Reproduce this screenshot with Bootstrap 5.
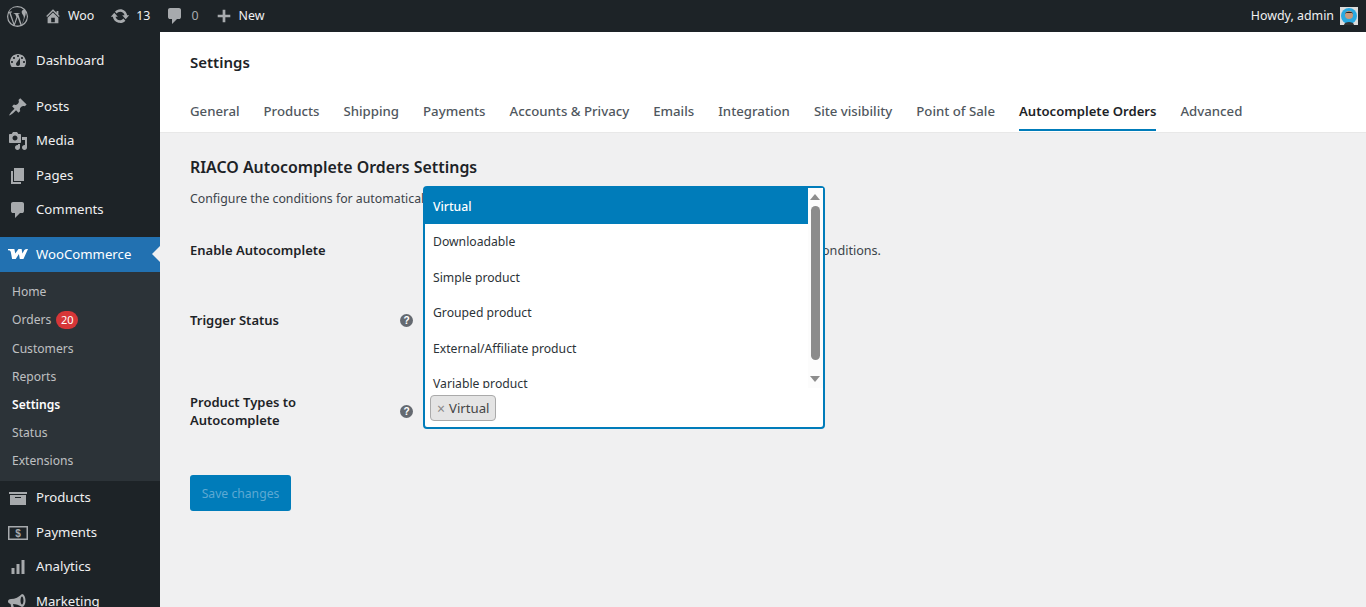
<!DOCTYPE html>
<html lang="en"><head><meta charset="utf-8"><title>Settings</title>
<link href="https://cdn.jsdelivr.net/npm/bootstrap@5.3.0/dist/css/bootstrap.min.css" rel="stylesheet">
<style>
html,body{height:607px;overflow:hidden}
body{font-family:"Noto Sans","Open Sans",sans-serif;font-size:12.3px;background:#f0f0f1;color:#3c434a}
.wpbar{height:32px;background:#1d2327;color:#f0f0f1;font-size:12.4px;padding-left:7px;padding-right:8px}
.wpbar svg{fill:#a7aaad;display:block}
.wpbar span{padding-top:1px}
.baritem{gap:6px;height:32px}
.barright{gap:6px}
.side{width:160px;background:#1d2327;height:575px;overflow:hidden;flex:none;padding-top:12px}
.mitem{height:34.45px;color:#f0f0f1;font-size:13.2px;padding:0 0 0 8px}
.mitem .ico{width:28px;flex:none;display:flex;align-items:center;justify-content:flex-start}
.mitem svg{fill:#a7aaad;display:block}
.mitem.cur{background:#2271b1;color:#fff;position:relative;margin-top:10px}
.mitem.cur svg{fill:#fff}
.mitem.cur::after{content:"";position:absolute;right:0;top:9px;border:8px solid transparent;border-right-color:#f0f0f1}
.gapm{margin-top:11px}
.subm{background:#2c3338;height:209.5px;padding:6.5px 0 0 12px;font-size:12.1px;color:rgba(240,240,241,.75)}
.subi{height:28.2px;display:flex;align-items:center;gap:5px}
.subi.on{color:#fff;font-weight:600}
.cnt{background:#d63638;color:#fff;font-size:11px;border-radius:10px;min-width:22px;height:18px;line-height:18px;text-align:center}
.hdr{background:#fff;height:101px;padding:20px 30px 0;border-bottom:1px solid #e8e8e8}
.hdr h1{font-size:15px;font-weight:600;color:#1d2327;margin:0;line-height:20px}
.wtabs{gap:24px;margin-top:28px}
.wtab{font-size:13.23px;font-weight:500;color:#50575e;height:31px;line-height:20px;padding-top:1px;white-space:nowrap}
.wtab.act{color:#1d2327;font-weight:600;font-size:13.1px;border-bottom:2px solid #007cba}
.body-area{padding:23px 30px 0;min-width:0}
.body-area h2{font-size:15.9px;font-weight:600;color:#1d2327;margin:0;line-height:22px}
.intro{margin:11px 0 0;line-height:20px;white-space:nowrap}
.frow{display:flex}
.flab{width:210px;flex:none;font-weight:600;color:#1d2327;font-size:13px;line-height:18px;padding-right:60px}
.helpi{width:23px;flex:none}
.helpi svg{display:block}
.r1{margin-top:32px;height:20px}
.r1 .flab{padding-right:0;white-space:nowrap}
.r2{margin-top:50px;height:20px}
.r3{margin-top:62px;align-items:flex-start}
.r1txt{width:458px;margin-left:23px;white-space:nowrap;text-align:right;font-size:12.6px;line-height:20px}
.fbox{position:relative;width:402px;height:39px;margin-top:-3px;background:#fff;border:2px solid #007cba;border-radius:0 0 4px 4px;padding:3px 5px}
.tagx{display:inline-flex;align-items:center;gap:4px;height:26px;padding:1px 5px 0 6px;background:#e4e4e4;border:1px solid #aaa;border-radius:4px;font-size:13.2px;color:#444}
.tagx b{font-weight:400;color:#888;font-size:14px}
.dropx{position:absolute;left:-2px;bottom:100%;width:402px;height:206px;background:#fff;border:2px solid #007cba;border-bottom:0;border-radius:4px 4px 0 0}
.optwrap{height:200px;overflow:hidden;position:relative}
.opt{height:35.5px;padding:2px 8px 0;display:flex;align-items:center;color:#2c3338;font-size:12.2px;margin-right:15px}
.opt.hi{background:#007cba;color:#fff;font-weight:500}
.sbar{position:absolute;right:0;top:0;width:15px;height:200px;background:#fcfcfc}
.sthumb{position:absolute;left:3px;top:18px;width:9px;height:154px;background:#8c8c8c;border-radius:5px}
.sup,.sdn{position:absolute;left:2px;border:5px solid transparent}
.sup{top:1px;border-bottom:6px solid #8c8c8c}
.sdn{top:188px;border-top:6px solid #8c8c8c}
.btn.savebtn,.btn.savebtn:disabled{display:block;margin-top:46px;width:101px;height:36px;background:#007cba;color:#5da9d3;border:0;border-radius:3px;font-size:12.2px;padding:3px 0 0;opacity:1}
</style></head><body>
<div class="wpbar d-flex align-items-center justify-content-between">
 <div class="d-flex align-items-center">
  <svg width="21" height="21" viewBox="0 0 20 20" style="margin-right:16px"><path fill-rule="evenodd" d="M10 0a10 10 0 1 0 0 20 10 10 0 0 0 0-20zm0 1.200a8.800 8.800 0 0 1 6 2.350c-1.200 0-2 1-2 2.100 0 1 .6 1.800 1.100 2.700.4.700.9 1.600.9 2.900 0 .9-.3 2-.9 3.600l-1 3.100-3.500-10.500c.6 0 1.100-.1 1.100-.1.500-.1.500-.8 0-.8 0 0-1.600.1-2.600.1s-2.500-.1-2.500-.1c-.5 0-.6.800 0 .8 0 0 .5.100 1 .1L9 10.400l-2.100 6.300L3.400 6.200c.6 0 1.100-.1 1.100-.1.500-.1.500-.8 0-.8 0 0-1.600.1-2.600.1A8.800 8.800 0 0 1 10 1.200zM1.200 10c0-1.300.3-2.500.8-3.600l4.200 11.500A8.800 8.800 0 0 1 1.200 10zm8.900.8 2.700 7.400a8.800 8.800 0 0 1-5.400.1zm7.700-4.900a8.800 8.800 0 0 1-3.300 11.800l2.700-7.700c.5-1.300.7-2.300.7-3.200 0-.3 0-.6-.1-.9z"/></svg>
  <div class="baritem d-flex align-items-center" style="margin-right:16px"><svg width="18" height="18" viewBox="0 0 20 20"><path d="M16 8.500l1.530 1.530-1.060 1.060L10 4.620l-6.470 6.470-1.060-1.060L10 2.500l4 4v-2h2v4zm-6-2.460l6 5.990V18H4v-5.970zM12 17v-5H8v5h4z"/></svg><span>Woo</span></div>
  <div class="baritem d-flex align-items-center" style="margin-right:17px"><svg width="20" height="20" viewBox="0 0 20 20"><path d="M10.200 3.280c3.530 0 6.430 2.610 6.920 6h2.080l-3.500 4-3.500-4h2.320c-.45-1.970-2.210-3.440-4.320-3.440-1.450 0-2.730.71-3.540 1.780L4.950 5.660C6.230 4.200 8.110 3.280 10.200 3.280zm-.4 13.440c-3.520 0-6.430-2.610-6.920-6H.8l3.500-4c1.170 1.330 2.330 2.670 3.500 4H5.480c.45 1.970 2.210 3.440 4.320 3.440 1.450 0 2.730-.71 3.540-1.780l2.090 2.370c-1.280 1.460-3.160 2.380-5.630 2.370z"/></svg><span>13</span></div>
  <div class="baritem d-flex align-items-center" style="margin-right:16px"><svg width="20" height="20" viewBox="0 0 20 20" style="margin-left:-2px"><path d="M5 2h9q.82 0 1.410.59T16 4v7q0 .82-.59 1.410T14 13h-2l-5 5v-5H5q-.82 0-1.410-.59T3 11V4q0-.82.59-1.410T5 2z"/></svg><span style="color:#a7aaad">0</span></div>
  <div class="baritem d-flex align-items-center" style="gap:6px"><svg width="18" height="18" viewBox="0 0 20 20"><path d="M8.500 3h3v5.500H17v3h-5.500V17h-3v-5.500H3v-3h5.500z"/></svg><span>New</span></div>
 </div>
 <div class="d-flex align-items-center barright">
  <span>Howdy, admin</span>
  <svg width="18" height="18" viewBox="0 0 18 18" style="fill:none"><rect width="18" height="18" fill="#ddd"/><circle cx="9" cy="9" r="8" fill="#29a9e1"/><circle cx="9" cy="8" r="4" fill="#c99a7c"/><path d="M5 7c0-3 8-3 8 0l-1-1H6z" fill="#222"/><path d="M4 18c0-4 10-4 10 0z" fill="#333"/></svg>
 </div>
</div>
<div class="d-flex">
 <nav class="side">
  <div class="mitem d-flex align-items-center"><span class="ico"><svg width="20" height="20" viewBox="0 0 20 20"><path d="M3.760 16h12.480c1.100-1.370 1.760-3.110 1.760-5 0-4.420-3.580-8-8-8s-8 3.580-8 8c0 1.890.66 3.630 1.760 5zM10 4c.55 0 1 .45 1 1s-.45 1-1 1-1-.45-1-1 .45-1 1-1zM6 6c.55 0 1 .45 1 1s-.45 1-1 1-1-.45-1-1 .45-1 1-1zm8 0c.55 0 1 .45 1 1s-.45 1-1 1-1-.45-1-1 .45-1 1-1zm-5.370 5.550L12 7v6c0 1.100-.9 2-2 2s-2-.9-2-2c0-.57.24-1.080.63-1.450zM4 10c.55 0 1 .45 1 1s-.45 1-1 1-1-.45-1-1 .45-1 1-1zm12 0c.55 0 1 .45 1 1s-.45 1-1 1-1-.45-1-1 .45-1 1-1z"/></svg></span>Dashboard</div>
  <div class="mitem d-flex align-items-center gapm"><span class="ico"><svg width="20" height="20" viewBox="0 0 20 20"><path d="M10.440 3.020l1.820-1.820 6.360 6.350-1.830 1.820c-1.050-.68-2.480-.57-3.410.36l-.75.75c-.92.93-1.040 2.350-.35 3.410l-1.830 1.820-2.410-2.410-2.800 2.790c-.42.42-3.380 2.710-3.800 2.290s1.860-3.390 2.280-3.810l2.790-2.790L4.100 9.360l1.830-1.820c1.050.69 2.480.57 3.400-.36l.75-.75c.93-.92 1.050-2.350.36-3.410z"/></svg></span>Posts</div>
  <div class="mitem d-flex align-items-center"><span class="ico"><svg width="20" height="20" viewBox="0 0 20 20"><path d="M13 11V4c0-.55-.45-1-1-1h-1.670L9 1H5L3.670 3H2c-.55 0-1 .45-1 1v7c0 .55.45 1 1 1h10c.55 0 1-.45 1-1zM7 4.500c1.380 0 2.500 1.120 2.500 2.500S8.380 9.500 7 9.500 4.500 8.380 4.500 7 5.620 4.500 7 4.500zM14 6h5v10.500c0 1.380-1.120 2.500-2.500 2.500S14 17.880 14 16.500s1.120-2.500 2.500-2.500c.17 0 .34.02.5.05V9h-3V6zm-4 8.050V13h2v3.500c0 1.380-1.120 2.500-2.500 2.500S7 17.880 7 16.500 8.120 14 9.500 14c.17 0 .34.02.5.05z"/></svg></span>Media</div>
  <div class="mitem d-flex align-items-center"><span class="ico"><svg width="20" height="20" viewBox="0 0 20 20"><path d="M6 15V2h10v13H6zm-1 1h8v2H3V5h2v11z"/></svg></span>Pages</div>
  <div class="mitem d-flex align-items-center"><span class="ico"><svg width="20" height="20" viewBox="0 0 20 20"><path d="M5 2h9q.82 0 1.410.59T16 4v7q0 .82-.59 1.410T14 13h-2l-5 5v-5H5q-.82 0-1.410-.59T3 11V4q0-.82.59-1.410T5 2z"/></svg></span>Comments</div>
  <div class="mitem cur d-flex align-items-center"><span class="ico"><svg width="20" height="12" viewBox="0 0 22 12"><path d="M0 .5h7l1 5L11.500.5h3.500l.8 5L18 1.500Q19 .2 22 .5l-5 11h-4L12 6l-3.500 5.500H4.500L3 3.500Q2.600 2 0 2z"/></svg></span>WooCommerce</div>
  <div class="subm">
   <div class="subi">Home</div>
   <div class="subi">Orders <span class="cnt">20</span></div>
   <div class="subi">Customers</div>
   <div class="subi">Reports</div>
   <div class="subi on">Settings</div>
   <div class="subi">Status</div>
   <div class="subi">Extensions</div>
  </div>
  <div class="mitem d-flex align-items-center"><span class="ico"><svg width="20" height="20" viewBox="0 0 20 20"><path d="M19 4v2H1V4h18zM2 7h16v10H2V7zm11 3V9H7v1h6z"/></svg></span>Products</div>
  <div class="mitem d-flex align-items-center"><span class="ico"><svg width="20" height="16" viewBox="0 0 20 16"><path fill-rule="evenodd" d="M0 1h20v14H0zm1.500 1.500v11h17v-11z"/><text x="10" y="12" text-anchor="middle" font-size="10" font-weight="700" font-family="Liberation Sans">$</text></svg></span>Payments</div>
  <div class="mitem d-flex align-items-center"><span class="ico"><svg width="20" height="20" viewBox="0 0 20 20"><path d="M18 3v14h-3V3h3zm-5 4v10h-3V7h3zm-5 4v6H5v-6h3z" transform="translate(-1.500 0)"/></svg></span>Analytics</div>
  <div class="mitem d-flex align-items-center"><span class="ico"><svg width="20" height="20" viewBox="0 0 20 20"><path fill-rule="evenodd" d="M14 2c2 0 3.500 3 3.500 6.500S16 15 14 15c-3-2-6-3-9-3l1.500 6H4l-1.500-6C1 11.500 0 10.500 0 9.500 0 8 1 7 3 7c4 0 8-2 11-5zm0 2.500c-.8 0-1.500 1.800-1.500 4s.7 4 1.500 4 1.500-1.800 1.500-4-.7-4-1.500-4z"/></svg></span>Marketing</div>
 </nav>
 <main class="flex-grow-1" style="min-width:0">
  <div class="hdr">
   <h1>Settings</h1>
   <div class="wtabs d-flex">
    <span class="wtab">General</span><span class="wtab">Products</span><span class="wtab">Shipping</span><span class="wtab">Payments</span><span class="wtab">Accounts &amp; Privacy</span><span class="wtab">Emails</span><span class="wtab">Integration</span><span class="wtab">Site visibility</span><span class="wtab">Point of Sale</span><span class="wtab act">Autocomplete Orders</span><span class="wtab">Advanced</span>
   </div>
  </div>
  <div class="body-area">
   <h2>RIACO Autocomplete Orders Settings</h2>
   <p class="intro">Configure the conditions for automatically completing orders.</p>
   <div class="frow r1"><div class="flab">Enable Autocomplete</div><div class="r1txt">Automatically complete orders that meet the conditions.</div></div>
   <div class="frow r2"><div class="flab">Trigger Status</div><div class="helpi"><svg width="13" height="13" viewBox="0 0 14 14" style="margin-top:3px"><circle cx="7" cy="7" r="7" fill="#646970"/><text x="7" y="11" text-anchor="middle" font-size="11" font-weight="700" fill="#fff" font-family="Liberation Sans">?</text></svg></div></div>
   <div class="frow r3">
    <div class="flab">Product Types to Autocomplete</div>
    <div class="helpi"><svg width="13" height="13" viewBox="0 0 14 14" style="margin-top:12px"><circle cx="7" cy="7" r="7" fill="#646970"/><text x="7" y="11" text-anchor="middle" font-size="11" font-weight="700" fill="#fff" font-family="Liberation Sans">?</text></svg></div>
    <div class="fbox">
     <div class="dropx">
      <div class="optwrap">
      <div class="opt hi">Virtual</div><div class="opt">Downloadable</div><div class="opt">Simple product</div><div class="opt">Grouped product</div><div class="opt">External/Affiliate product</div><div class="opt">Variable product</div>
      <div class="sbar"><i class="sup"></i><i class="sthumb"></i><i class="sdn"></i></div>
      </div>
     </div>
     <span class="tagx"><b>×</b>Virtual</span>
    </div>
   </div>
   <button class="savebtn btn" type="button" disabled>Save changes</button>
  </div>
 </main>
</div>
<script src="https://cdn.jsdelivr.net/npm/bootstrap@5.3.0/dist/js/bootstrap.bundle.min.js"></script>
</body></html>
